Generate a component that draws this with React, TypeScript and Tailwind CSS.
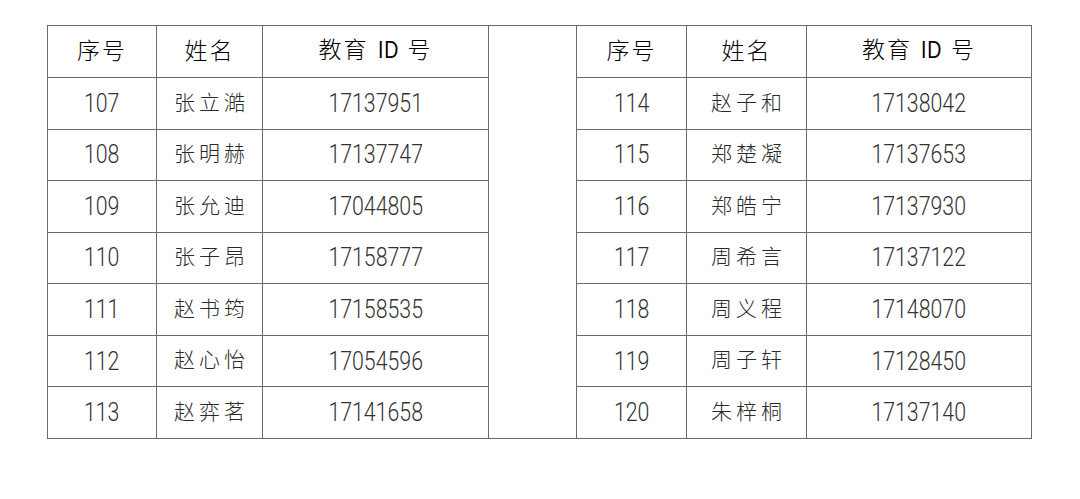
const left = [
  ["107", "张立澔", "17137951"],
  ["108", "张明赫", "17137747"],
  ["109", "张允迪", "17044805"],
  ["110", "张子昂", "17158777"],
  ["111", "赵书筠", "17158535"],
  ["112", "赵心怡", "17054596"],
  ["113", "赵弈茗", "17141658"],
];

const right = [
  ["114", "赵子和", "17138042"],
  ["115", "郑楚凝", "17137653"],
  ["116", "郑皓宁", "17137930"],
  ["117", "周希言", "17137122"],
  ["118", "周义程", "17148070"],
  ["119", "周子轩", "17128450"],
  ["120", "朱梓桐", "17137140"],
];

const cell = "border border-[#6b6b6b] p-0 text-center align-middle";

function Num({ value }: { value: string }) {
  return (
    <span className="inline-block origin-center scale-x-[0.82] font-['Roboto',sans-serif] text-[26px] font-light text-[#333]">
      {value}
    </span>
  );
}

function Name({ value }: { value: string }) {
  return (
    <span className="relative -top-[2px] pl-[4px] font-['Noto_Sans_CJK_SC',sans-serif] text-[21px] font-light tracking-[4px] text-[#2a2a2a]">
      {value}
    </span>
  );
}

function Head({ children }: { children: React.ReactNode }) {
  return (
    <td className={`${cell} pb-[5px] font-['Noto_Sans_CJK_SC',sans-serif] text-[23px] font-light tracking-[2px] text-black`}>
      {children}
    </td>
  );
}

function IdHead() {
  return (
    <Head>
      教育 <span className="inline-block scale-x-[0.85] font-['Liberation_Sans',sans-serif] text-[23px] tracking-[1px]">ID</span> 号
    </Head>
  );
}

export default function App() {
  return (
    <div className="h-[499px] w-[1080px] bg-white pl-[47px] pt-[25px]">
      <table className="table-fixed border-collapse">
        <colgroup>
          <col className="w-[109px]" />
          <col className="w-[106px]" />
          <col className="w-[226px]" />
          <col className="w-[88px]" />
          <col className="w-[110px]" />
          <col className="w-[120px]" />
          <col className="w-[225px]" />
        </colgroup>
        <tbody>
          <tr className="h-[52px]">
            <Head>序号</Head>
            <Head>姓名</Head>
            <IdHead />
            <td rowSpan={8} className={cell}></td>
            <Head>序号</Head>
            <Head>姓名</Head>
            <IdHead />
          </tr>
          {left.map((row, i) => (
            <tr key={row[0]} className="h-[51.57px]">
              <td className={cell}>
                <Num value={row[0]} />
              </td>
              <td className={cell}>
                <Name value={row[1]} />
              </td>
              <td className={cell}>
                <Num value={row[2]} />
              </td>
              <td className={cell}>
                <Num value={right[i][0]} />
              </td>
              <td className={cell}>
                <Name value={right[i][1]} />
              </td>
              <td className={cell}>
                <Num value={right[i][2]} />
              </td>
            </tr>
          ))}
        </tbody>
      </table>
    </div>
  );
}
